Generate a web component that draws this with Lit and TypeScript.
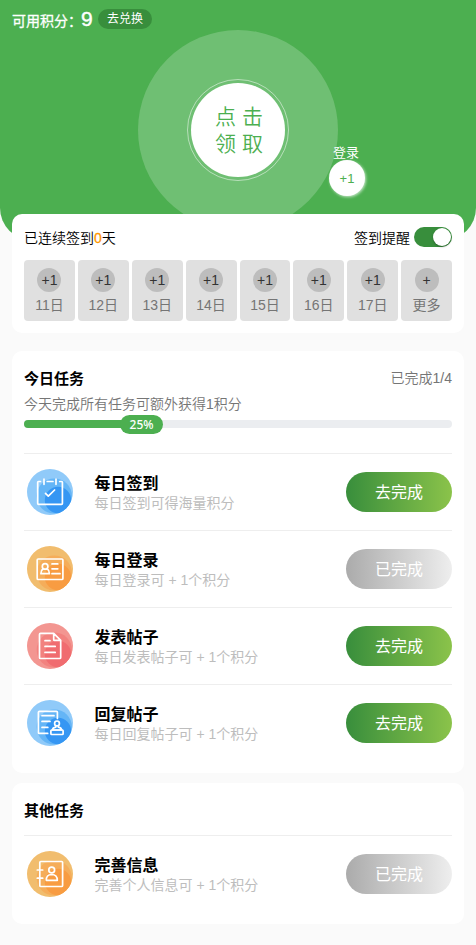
import { LitElement, html, css, svg, type SVGTemplateResult } from "lit";
import { customElement, property } from "lit/decorators.js";

type IconName = "calendar" | "idcard" | "document" | "reply" | "contact";

interface Task {
  icon: IconName;
  title: string;
  note: string;
  done: boolean;
}

const DAYS = ["11日", "12日", "13日", "14日", "15日", "16日", "17日"];

const DAILY: Task[] = [
  { icon: "calendar", title: "每日签到", note: "每日签到可得海量积分", done: false },
  { icon: "idcard", title: "每日登录", note: "每日登录可 + 1个积分", done: true },
  { icon: "document", title: "发表帖子", note: "每日发表帖子可 + 1个积分", done: false },
  { icon: "reply", title: "回复帖子", note: "每日回复帖子可 + 1个积分", done: false },
];

const OTHER: Task[] = [
  { icon: "contact", title: "完善信息", note: "完善个人信息可 + 1个积分", done: true },
];

const BLUE = ["#90caf9", "#64b5f6", "#3596f3"];
const ORANGE = ["#f1bd6e", "#f5ad5a", "#f89c42"];
const RED = ["#f39691", "#f2827f", "#f06c70"];

const ICONS: Record<IconName, { tones: string[]; art: SVGTemplateResult }> = {
  calendar: {
    tones: BLUE,
    art: svg`<path d="M13.5 12.5H11.5Q10.7 12.5 10.7 13.3V34.4Q10.7 35.3 11.6 35.3H34.5Q35.4 35.3 35.4 34.4V13.3Q35.4 12.5 34.6 12.5H32.7M20.2 12.5H26M17 10.2V15.3M29 10.2V15.3M18.5 24.3L21.3 27.2L27.6 21"/>`,
  },
  idcard: {
    tones: ORANGE,
    art: svg`<rect x="10.2" y="13" width="25.7" height="20.5" rx="1"/>
      <circle cx="18.1" cy="20.4" r="2.8"/>
      <path d="M15.8 23Q13.9 24.3 13.9 27.7H22.4Q22.4 24.3 20.4 23M25 17.9H30.8M25 22.8H30.8M25 27.7H33"/>`,
  },
  document: {
    tones: RED,
    art: svg`<path d="M26.7 10.4H13.5Q12.5 10.4 12.5 11.4V34.5Q12.5 35.5 13.5 35.5H32.7Q33.7 35.5 33.7 34.5V17.4L26.7 10.4V16.4Q26.7 17.4 27.7 17.4H33.7M18 17.7H23M18 23.4H28.2M18 29.4H28.2"/>`,
  },
  reply: {
    tones: BLUE,
    art: svg`<path d="M20.7 33.4H12.4Q11.4 33.4 11.4 32.4V12.3Q11.4 11.3 12.4 11.3H29.4Q30.4 11.3 30.4 12.3V18.4M15 15.7H27M15 21.4H23M15 27.4H20.8"/>
      <circle cx="30" cy="23.4" r="2.4"/>
      <path d="M28.8 25.6V27.2Q25.8 27.6 25.4 30H34.7Q34.2 27.6 31.3 27.2V25.6"/>
      <rect x="23.9" y="30" width="12.2" height="4.5" rx="0.8"/>`,
  },
  contact: {
    tones: ORANGE,
    art: svg`<rect x="12.8" y="10.5" width="22.8" height="25" rx="1"/>
      <path d="M10.3 19H15.7M10.3 27.2H15.7M19.3 29.3Q19.1 23.7 24.7 23.5Q30.3 23.7 30.3 29.3Z"/>
      <circle cx="24.7" cy="19" r="2.9"/>`,
  },
};

@customElement("task-icon")
export class TaskIcon extends LitElement {
  @property() name: IconName = "calendar";

  static styles = css`
    :host { display: block; width: 46px; height: 46px; }
    .icon { display: block; }
    .art { fill: none; stroke: #fff; stroke-width: 1.7; stroke-linecap: round; stroke-linejoin: round; }
  `;

  render() {
    const { tones, art } = ICONS[this.name];
    return html`<svg class="icon" width="46" height="46" viewBox="0 0 46 46">
      <clipPath id="disc"><circle cx="23" cy="23" r="23" /></clipPath>
      <g clip-path="url(#disc)">
        <rect width="46" height="46" fill=${tones[0]} />
        <circle cx="27.3" cy="27" r="17.6" fill=${tones[1]} />
        <circle cx="31" cy="31" r="13.2" fill=${tones[2]} />
      </g>
      <g class="art">${art}</g>
    </svg>`;
  }
}

@customElement("task-row")
export class TaskRow extends LitElement {
  @property({ attribute: false }) task!: Task;

  static styles = css`
    :host {
      box-sizing: border-box; display: flex; align-items: center; height: 77px;
      border-top: 1px solid #eeeeee; padding-left: 3px;
    }
    .text { flex: 1; padding: 2px 0 0 21.5px; }
    .title { font-size: 16px; font-weight: 700; line-height: 20px; color: #000; }
    .note { font-size: 14px; line-height: 19px; color: #bdbdbd; white-space: nowrap; }
    .action {
      width: 106px; height: 40px; border: 0; border-radius: 20px; padding: 1px 0 0;
      font: inherit; font-size: 16px; line-height: 39px; color: #fff;
      background: linear-gradient(90deg, #388e3c, #8bc34a);
    }
    .done { background: linear-gradient(90deg, #ababab, #eeeeee); }
  `;

  render() {
    const t = this.task;
    return html`
      <task-icon .name=${t.icon}></task-icon>
      <div class="text">
        <div class="title">${t.title}</div>
        <div class="note">${t.note}</div>
      </div>
      <button class="action ${t.done ? "done" : ""}">${t.done ? "已完成" : "去完成"}</button>
    `;
  }
}

@customElement("app-root")
export class AppRoot extends LitElement {
  static styles = css`
    :host {
      display: block; min-height: 945px; background: #fafafa; color: #000;
      font-family: "Liberation Sans", "Noto Sans CJK SC", sans-serif; font-size: 14px;
    }
    * { box-sizing: border-box; }
    .hero {
      position: relative; height: 240px; background: #4caf50;
      border-radius: 0 0 32px 32px; overflow: hidden; padding-top: 9px;
    }
    .points { display: flex; align-items: center; height: 20px; padding-left: 12px; color: #fff; }
    .label { width: 69px; line-height: 20px; padding-top: 2px; height: 20px; white-space: nowrap; -webkit-text-stroke: 0.3px #fff; }
    .count { width: 17px; font-size: 21px; line-height: 20px; -webkit-text-stroke: 0.4px #fff; }
    .exchange {
      width: 54px; height: 20px; border-radius: 10px; background: #388e3c;
      font-size: 12px; line-height: 20px; text-align: center;
    }
    .halo {
      display: flex; align-items: center; justify-content: center;
      width: 200px; height: 200px; margin: 1px auto 0; border-radius: 50%;
      background: rgba(255, 255, 255, 0.2);
    }
    .ring {
      display: flex; align-items: center; justify-content: center;
      width: 102px; height: 102px; border-radius: 50%; border: 1.5px solid rgba(255, 255, 255, 0.5);
    }
    .claim {
      width: 94px; height: 94px; border-radius: 50%; background: #fff; color: #4caf50;
      padding: 20px 0 0 24px; font-size: 21px; line-height: 27px; letter-spacing: 6px; font-weight: 350;
      white-space: nowrap;
    }
    .claim-line { height: 27px; }
    .bonus { position: absolute; left: 329px; top: 145px; width: 36px; color: #fff; }
    .bonus-name { font-size: 13px; line-height: 16px; height: 15px; text-align: center; white-space: nowrap; margin-left: -2px; }
    .bonus-dot {
      width: 36px; height: 36px; border-radius: 50%; background: #fff; color: #4caf50;
      font-size: 13px; line-height: 37px; text-align: center;
      box-shadow: 1px 1px 3px rgba(255, 255, 255, 0.7);
    }
    .card { position: relative; margin: 0 12px; padding: 0 12px 12px; border-radius: 10px; background: #fff; }
    .sign { margin-top: -26px; height: 119px; }
    .between { display: flex; justify-content: space-between; align-items: center; }
    .sign-head { height: 46px; font-weight: 350; }
    .streak { color: #ff9800; -webkit-text-stroke: 0.3px #ff9800; }
    .remind { display: flex; align-items: center; gap: 4px; }
    .switch {
      display: flex; justify-content: flex-end; width: 38px; height: 20px; padding: 1px;
      border-radius: 10px; background: #388e3c;
    }
    .knob { width: 18px; height: 18px; border-radius: 50%; background: #fff; box-shadow: 0 1px 2px rgba(0, 0, 0, 0.3); }
    .days { display: grid; grid-template-columns: repeat(8, 1fr); gap: 3px; }
    .day { height: 61px; padding-top: 8px; border-radius: 4px; background: #e0e0e0; color: #757575; text-align: center; }
    .plus {
      width: 24px; height: 24px; margin: 0 auto 3px; border-radius: 50%;
      background: #bdbdbd; color: #333; line-height: 25px;
    }
    .day-name { line-height: 20px; }
    .daily { margin-top: 18px; height: 422px; }
    .other { margin-top: 10px; height: 141px; }
    .heading { font-size: 15px; font-weight: 700; }
    .daily-head { height: 43px; padding-top: 10px; }
    .muted { color: #757575; font-weight: 350; }
    .count-done { padding-bottom: 2px; }
    .sub { line-height: 20px; }
    .progress {
      display: flex; align-items: center; height: 8px; margin: 6px 0 25px;
      border-radius: 4px; background: #ebedf0;
    }
    .fill { height: 8px; border-radius: 4px 0 0 4px; background: #4caf50; }
    .percent {
      width: 43px; height: 19px; margin-left: -11px; border-radius: 10px; background: #4caf50; color: #fff;
      font: 500 12px/19px "Noto Sans", sans-serif; text-align: center;
    }
    .other-head { height: 52px; line-height: 56px; }
  `;

  render() {
    const progress = 25;
    return html`
      <header class="hero">
        <div class="points">
          <span class="label">可用积分：</span><span class="count">9</span>
          <span class="exchange">去兑换</span>
        </div>
        <div class="halo">
          <div class="ring">
            <div class="claim">
              <div class="claim-line">点击</div>
              <div class="claim-line">领取</div>
            </div>
          </div>
        </div>
        <div class="bonus">
          <div class="bonus-name">登录</div>
          <div class="bonus-dot">+1</div>
        </div>
      </header>

      <section class="card sign">
        <div class="between sign-head">
          <span>已连续签到<span class="streak">0</span>天</span>
          <span class="remind">签到提醒<span class="switch"><span class="knob"></span></span></span>
        </div>
        <div class="days">
          ${DAYS.map((d) => html`<div class="day"><div class="plus">+1</div><div class="day-name">${d}</div></div>`)}
          <div class="day"><div class="plus">+</div><div class="day-name">更多</div></div>
        </div>
      </section>

      <section class="card daily">
        <div class="between daily-head">
          <span class="heading">今日任务</span><span class="muted count-done">已完成1/4</span>
        </div>
        <div class="muted sub">今天完成所有任务可额外获得1积分</div>
        <div class="progress">
          <div class="fill" style="width:${progress}%"></div>
          <div class="percent">${progress}%</div>
        </div>
        ${DAILY.map((t) => html`<task-row .task=${t}></task-row>`)}
      </section>

      <section class="card other">
        <div class="heading other-head">其他任务</div>
        ${OTHER.map((t) => html`<task-row .task=${t}></task-row>`)}
      </section>
    `;
  }
}
